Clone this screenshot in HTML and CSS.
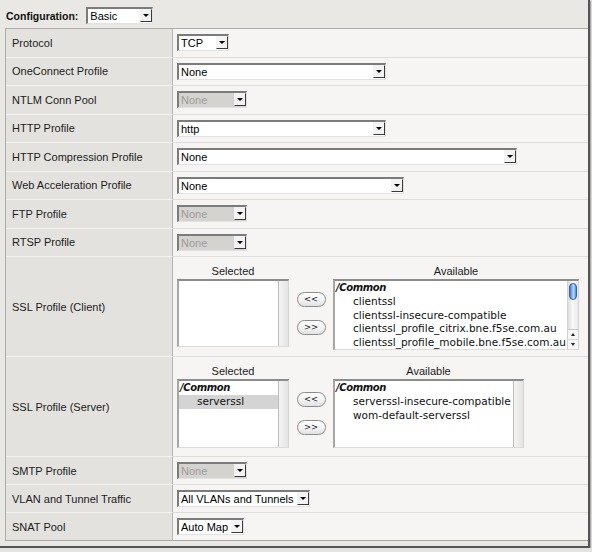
FILE: index.html
```html
<!DOCTYPE html>
<html>
<head>
<meta charset="utf-8">
<title>Configuration</title>
<link rel="stylesheet" href="styles.css">
</head>
<body>
<div class="window">
  <div class="config-bar">
    <span class="config-label">Configuration:</span>
    <div class="dd dd-w67"><span class="dd-text">Basic</span><span class="dd-btn"><span class="tri"></span></span></div>
  </div>
  <div class="props">
    <div class="row">
      <div class="label">Protocol</div>
      <div class="value"><div class="dd dd-w52"><span class="dd-text">TCP</span><span class="dd-btn"><span class="tri"></span></span></div></div>
    </div>
    <div class="row">
      <div class="label">OneConnect Profile</div>
      <div class="value"><div class="dd dd-w209"><span class="dd-text">None</span><span class="dd-btn"><span class="tri"></span></span></div></div>
    </div>
    <div class="row">
      <div class="label">NTLM Conn Pool</div>
      <div class="value"><div class="dd dd-w70 is-disabled"><span class="dd-text">None</span><span class="dd-btn"><span class="tri"></span></span></div></div>
    </div>
    <div class="row">
      <div class="label">HTTP Profile</div>
      <div class="value"><div class="dd dd-w209"><span class="dd-text">http</span><span class="dd-btn"><span class="tri"></span></span></div></div>
    </div>
    <div class="row">
      <div class="label">HTTP Compression Profile</div>
      <div class="value"><div class="dd dd-w340"><span class="dd-text">None</span><span class="dd-btn"><span class="tri"></span></span></div></div>
    </div>
    <div class="row">
      <div class="label">Web Acceleration Profile</div>
      <div class="value"><div class="dd dd-w227"><span class="dd-text">None</span><span class="dd-btn"><span class="tri"></span></span></div></div>
    </div>
    <div class="row">
      <div class="label">FTP Profile</div>
      <div class="value"><div class="dd dd-w70 is-disabled"><span class="dd-text">None</span><span class="dd-btn"><span class="tri"></span></span></div></div>
    </div>
    <div class="row">
      <div class="label">RTSP Profile</div>
      <div class="value"><div class="dd dd-w70 is-disabled"><span class="dd-text">None</span><span class="dd-btn"><span class="tri"></span></span></div></div>
    </div>

    <div class="row row-ssl">
      <div class="label">SSL Profile (Client)</div>
      <div class="value">
        <div class="ssl">
          <div class="ssl-head">Selected</div>
          <div></div>
          <div class="ssl-head">Available</div>
          <div class="listbox lb-sel lb-h68">
            <div class="lb-items"></div>
            <div class="lb-strip"></div>
          </div>
          <div class="mover">
            <button class="pill">&lt;&lt;</button>
            <button class="pill">&gt;&gt;</button>
          </div>
          <div class="listbox lb-avail-client lb-h71">
            <div class="lb-items">
              <div class="lb-group">/Common</div>
              <div class="lb-item">clientssl</div>
              <div class="lb-item">clientssl-insecure-compatible</div>
              <div class="lb-item">clientssl_profile_citrix.bne.f5se.com.au</div>
              <div class="lb-item">clientssl_profile_mobile.bne.f5se.com.au</div>
            </div>
            <div class="aqua">
              <div class="aqua-thumb"></div>
              <div class="aqua-space"></div>
              <div class="aqua-arrows">
                <span class="aqua-arrow"><span class="tri-up"></span></span>
                <span class="aqua-arrow"><span class="tri-down"></span></span>
              </div>
            </div>
          </div>
        </div>
      </div>
    </div>

    <div class="row row-ssl">
      <div class="label">SSL Profile (Server)</div>
      <div class="value">
        <div class="ssl">
          <div class="ssl-head">Selected</div>
          <div></div>
          <div class="ssl-head">Available</div>
          <div class="listbox lb-sel lb-h69">
            <div class="lb-items">
              <div class="lb-group">/Common</div>
              <div class="lb-item is-selected">serverssl</div>
            </div>
            <div class="lb-strip"></div>
          </div>
          <div class="mover">
            <button class="pill">&lt;&lt;</button>
            <button class="pill">&gt;&gt;</button>
          </div>
          <div class="listbox lb-avail-server lb-h69">
            <div class="lb-items">
              <div class="lb-group">/Common</div>
              <div class="lb-item">serverssl-insecure-compatible</div>
              <div class="lb-item">wom-default-serverssl</div>
            </div>
            <div class="lb-strip"></div>
          </div>
        </div>
      </div>
    </div>

    <div class="row row-sm">
      <div class="label">SMTP Profile</div>
      <div class="value"><div class="dd dd-w70 is-disabled"><span class="dd-text">None</span><span class="dd-btn"><span class="tri"></span></span></div></div>
    </div>
    <div class="row row-sm">
      <div class="label">VLAN and Tunnel Traffic</div>
      <div class="value"><div class="dd dd-w133"><span class="dd-text">All VLANs and Tunnels</span><span class="dd-btn"><span class="tri"></span></span></div></div>
    </div>
    <div class="row row-sm">
      <div class="label">SNAT Pool</div>
      <div class="value"><div class="dd dd-w67"><span class="dd-text">Auto Map</span><span class="dd-btn"><span class="tri"></span></span></div></div>
    </div>
  </div>
</div>
</body>
</html>
```

FILE: styles.css
```css
* { box-sizing: border-box; }

html, body {
  margin: 0;
  padding: 0;
  background: #e3e3e3;
}

body {
  font-family: "Liberation Sans", Arial, sans-serif;
  font-size: 11px;
  color: #1c1c1c;
}

.window {
  width: 590px;
  height: 548px;
  background: #e9e8e4;
  border-right: 2px solid #555555;
  border-bottom: 2px solid #555555;
  box-shadow: 1px 1px 1px rgba(0, 0, 0, 0.25);
}

.config-bar {
  height: 28px;
  padding: 3px 0 0 6px;
  display: flex;
  align-items: center;
  gap: 8px;
}

.config-label {
  font-weight: bold;
  font-size: 10.5px;
  color: #111;
}

/* ---------- property table ---------- */

.props {
  margin-left: 5px;
  border-top: 1px solid #adaca8;
  border-left: 1px solid #adaca8;
}

.row {
  display: grid;
  grid-template-columns: 167px 1fr;
  height: 28.5px;
}

.row-sm { height: 28px; }
.row-ssl { height: 100px; }

.label {
  background: #e3e2de;
  border-right: 1px solid #b6b5b1;
  border-bottom: 1px solid #f4f3f0;
  display: flex;
  align-items: center;
  padding-left: 6px;
  white-space: nowrap;
}

.value {
  background: #f6f5f3;
  border-bottom: 1px solid #dddcd8;
  display: flex;
  align-items: center;
  padding-left: 4px;
}

.row:last-child .label,
.row:last-child .value {
  border-bottom-color: #a9a8a4;
}

.row-ssl .value {
  align-items: flex-start;
  padding-top: 7px;
}

/* ---------- dropdowns ---------- */

.dd {
  display: flex;
  align-items: flex-start;
  height: 17px;
  background: #ffffff;
  border-top: 2px solid #7b7b7b;
  border-left: 2px solid #7b7b7b;
  border-right: 1px solid #e2e2e2;
  border-bottom: 1px solid #e2e2e2;
  font-family: "Liberation Sans", Arial, sans-serif;
  font-size: 11px;
  color: #000;
}

.dd-text {
  flex: 1;
  min-width: 0;
  padding-left: 2px;
  line-height: 14px;
  white-space: nowrap;
  overflow: hidden;
}

.dd-btn {
  flex: none;
  width: 12px;
  height: 13px;
  border: 1px solid;
  border-color: #f2f2f2 #3a3a3a #3a3a3a #f2f2f2;
  background: #f3f3f3;
  display: flex;
  align-items: center;
  justify-content: center;
}

.tri {
  width: 0;
  height: 0;
  border-left: 3px solid transparent;
  border-right: 3px solid transparent;
  border-top: 3px solid #000;
}

.dd.is-disabled { background: #d5d3cf; }
.dd.is-disabled .dd-text { color: #9c9c9c; }

.dd-w52 { width: 52px; }
.dd-w67 { width: 67px; }
.dd-w70 { width: 70px; }
.dd-w133 { width: 133px; }
.dd-w209 { width: 209px; }
.dd-w227 { width: 227px; }
.dd-w340 { width: 340px; }

/* ---------- SSL selector ---------- */

.ssl {
  display: grid;
  grid-template-columns: 112px 44px auto;
  grid-template-rows: 15px auto;
  align-items: start;
}

.ssl-head {
  text-align: center;
  line-height: 15px;
  color: #1c1c1c;
}

.mover {
  display: flex;
  flex-direction: column;
  align-items: center;
  gap: 13px;
  padding-top: 13px;
}

.pill {
  width: 29px;
  height: 15px;
  padding: 0;
  margin: 0;
  border: 1px solid #8c8c8c;
  border-radius: 8px;
  background: linear-gradient(#ffffff, #f1f1f1 60%, #e2e2e2);
  font-family: "DejaVu Sans", sans-serif;
  font-size: 8.5px;
  line-height: 13px;
  color: #222;
}

.listbox {
  display: flex;
  background: #ffffff;
  border-top: 2px solid #8c8c8c;
  border-left: 2px solid #a6a6a6;
  border-right: 1px solid #d4d4d4;
  border-bottom: 1px solid #dcdcdc;
  font-family: "DejaVu Sans", sans-serif;
  font-size: 10.5px;
  line-height: 13.75px;
  color: #111;
  overflow: hidden;
}

.lb-sel { width: 112px; }
.lb-avail-client { width: 246px; }
.lb-avail-server { width: 191px; }
.lb-h68 { height: 68px; }
.lb-h69 { height: 69px; }
.lb-h71 { height: 71px; }

.lb-items {
  flex: 1;
  min-width: 0;
  white-space: nowrap;
  overflow: hidden;
}

.lb-group {
  font-weight: bold;
  font-style: italic;
  font-size: 10px;
  letter-spacing: -0.4px;
  padding-left: 1px;
}

.lb-item { padding-left: 18px; }
.lb-item.is-selected { background: #d4d4d4; }

.lb-strip {
  flex: none;
  width: 10px;
  background: linear-gradient(to right, #bcbcbc 0, #bcbcbc 1px, #f4f4f4 1px, #e4e4e4 100%);
}

/* aqua scrollbar */
.aqua {
  flex: none;
  width: 11px;
  display: flex;
  flex-direction: column;
  border-left: 1px solid #d2d2d2;
  background: linear-gradient(to right, #dddddd, #f8f8f8 45%, #ebebeb);
}

.aqua-thumb {
  height: 17px;
  margin: 2px 1px 0 1px;
  border: 1px solid #3461a8;
  border-radius: 5px;
  background: linear-gradient(to right, #3f7ad8 0%, #8fbdf4 40%, #c0defc 60%, #4a86dd 100%);
}

.aqua-space {
  flex: 1;
  border-bottom-left-radius: 5px;
  border-bottom-right-radius: 5px;
}

.aqua-arrows {
  height: 20px;
  display: flex;
  flex-direction: column;
  border-top: 1px solid #c9c9c9;
  background: #f6f6f6;
}

.aqua-arrow {
  flex: 1;
  display: flex;
  align-items: center;
  justify-content: center;
}

.aqua-arrow + .aqua-arrow { border-top: 1px solid #dadada; }

.tri-up {
  width: 0;
  height: 0;
  border-left: 2.5px solid transparent;
  border-right: 2.5px solid transparent;
  border-bottom: 3px solid #222;
}

.tri-down {
  width: 0;
  height: 0;
  border-left: 2.5px solid transparent;
  border-right: 2.5px solid transparent;
  border-top: 3px solid #222;
}
```
